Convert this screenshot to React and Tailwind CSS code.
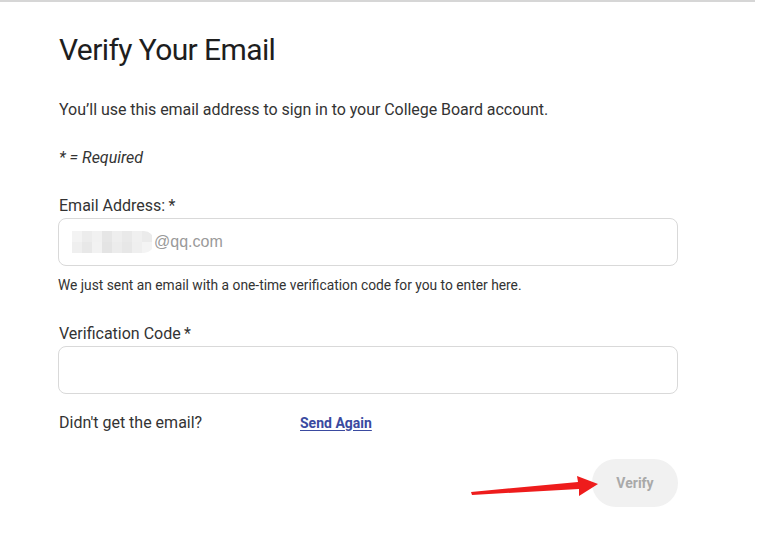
import React from "react";

export default function App() {
  const blocks = [
    "#f3f3f3", "#ececec", "#f1f1f1", "#e6e6e6", "#eeeeee", "#e9e9e9", "#f0f0f0", "#ebebeb",
  ];
  const blocks2 = [
    "#efefef", "#e8e8e8", "#f2f2f2", "#e4e4e4", "#ececec", "#e7e7e7", "#efefef", "#f4f4f4",
  ];
  return (
    <div
      className="relative w-[758px] h-[542px] bg-white overflow-hidden text-[#222]"
      style={{ fontFamily: "Roboto, 'Noto Sans', sans-serif" }}
    >
      <div className="h-[2px] w-[755px] bg-[#d6d6d6]" />
      <div className="pl-[59px] pt-[29px] w-[678px]">
        <h1 className="text-[30px] leading-[38px] font-normal tracking-[-0.6px] text-[#1e1e1e]">
          Verify Your Email
        </h1>
        <p className="mt-[31px] text-[16px] leading-[20px] tracking-[-0.05px] text-[#333]">
          You’ll use this email address to sign in to your College Board account.
        </p>
        <p className="mt-[28px] text-[16px] leading-[20px] italic text-[#333]">* = Required</p>
        <label className="block mt-[28px] text-[16px] leading-[20px] text-[#333]">Email Address:&thinsp;*</label>
        <div className="mt-[2px] -ml-px h-[48px] w-[620px] rounded-[8px] border border-[#d9d9d9] flex items-center pl-[13px]">
          <div className="flex flex-col w-[82px] h-[22px] overflow-hidden rounded-r-[10px]">
            <div className="flex h-[11px]">
              {blocks.map((c, i) => (
                <div key={i} className="w-[10px] h-[11px]" style={{ background: c }} />
              ))}
            </div>
            <div className="flex h-[11px]">
              {blocks2.map((c, i) => (
                <div key={i} className="w-[10px] h-[11px]" style={{ background: c }} />
              ))}
            </div>
          </div>
          <span className="text-[16px] text-[#9a9a9a]" style={{ fontFamily: "Arial, 'Liberation Sans', sans-serif" }}>
            @qq.com
          </span>
        </div>
        <p className="mt-[11px] -ml-px text-[13.8px] leading-[17px] text-[#333]">
          We just sent an email with a one-time verification code for you to enter here.
        </p>
        <label className="block mt-[30px] text-[16px] leading-[20px] text-[#333]">Verification Code&thinsp;*</label>
        <div className="mt-[2px] -ml-px h-[48px] w-[620px] rounded-[8px] border border-[#d9d9d9]" />
        <div className="mt-[19px] flex items-center h-[20px]">
          <span className="text-[16px] text-[#333] w-[241px]">Didn't get the email?</span>
          <a className="text-[14px] font-bold text-[#3a4aa0] underline underline-offset-2">Send Again</a>
        </div>
        <div className="mt-[26px] flex justify-end">
          <button className="w-[86px] h-[48px] rounded-full bg-[#f1f1f1] text-[14px] font-bold text-[#a9a9a9]">
            Verify
          </button>
        </div>
      </div>
      <svg className="absolute left-0 top-0 pointer-events-none" width="758" height="542">
        <polygon points="471,492 578,482 577,476 598,484 579,496 579,489 472,495" fill="#ee1c1c" />
      </svg>
    </div>
  );
}
